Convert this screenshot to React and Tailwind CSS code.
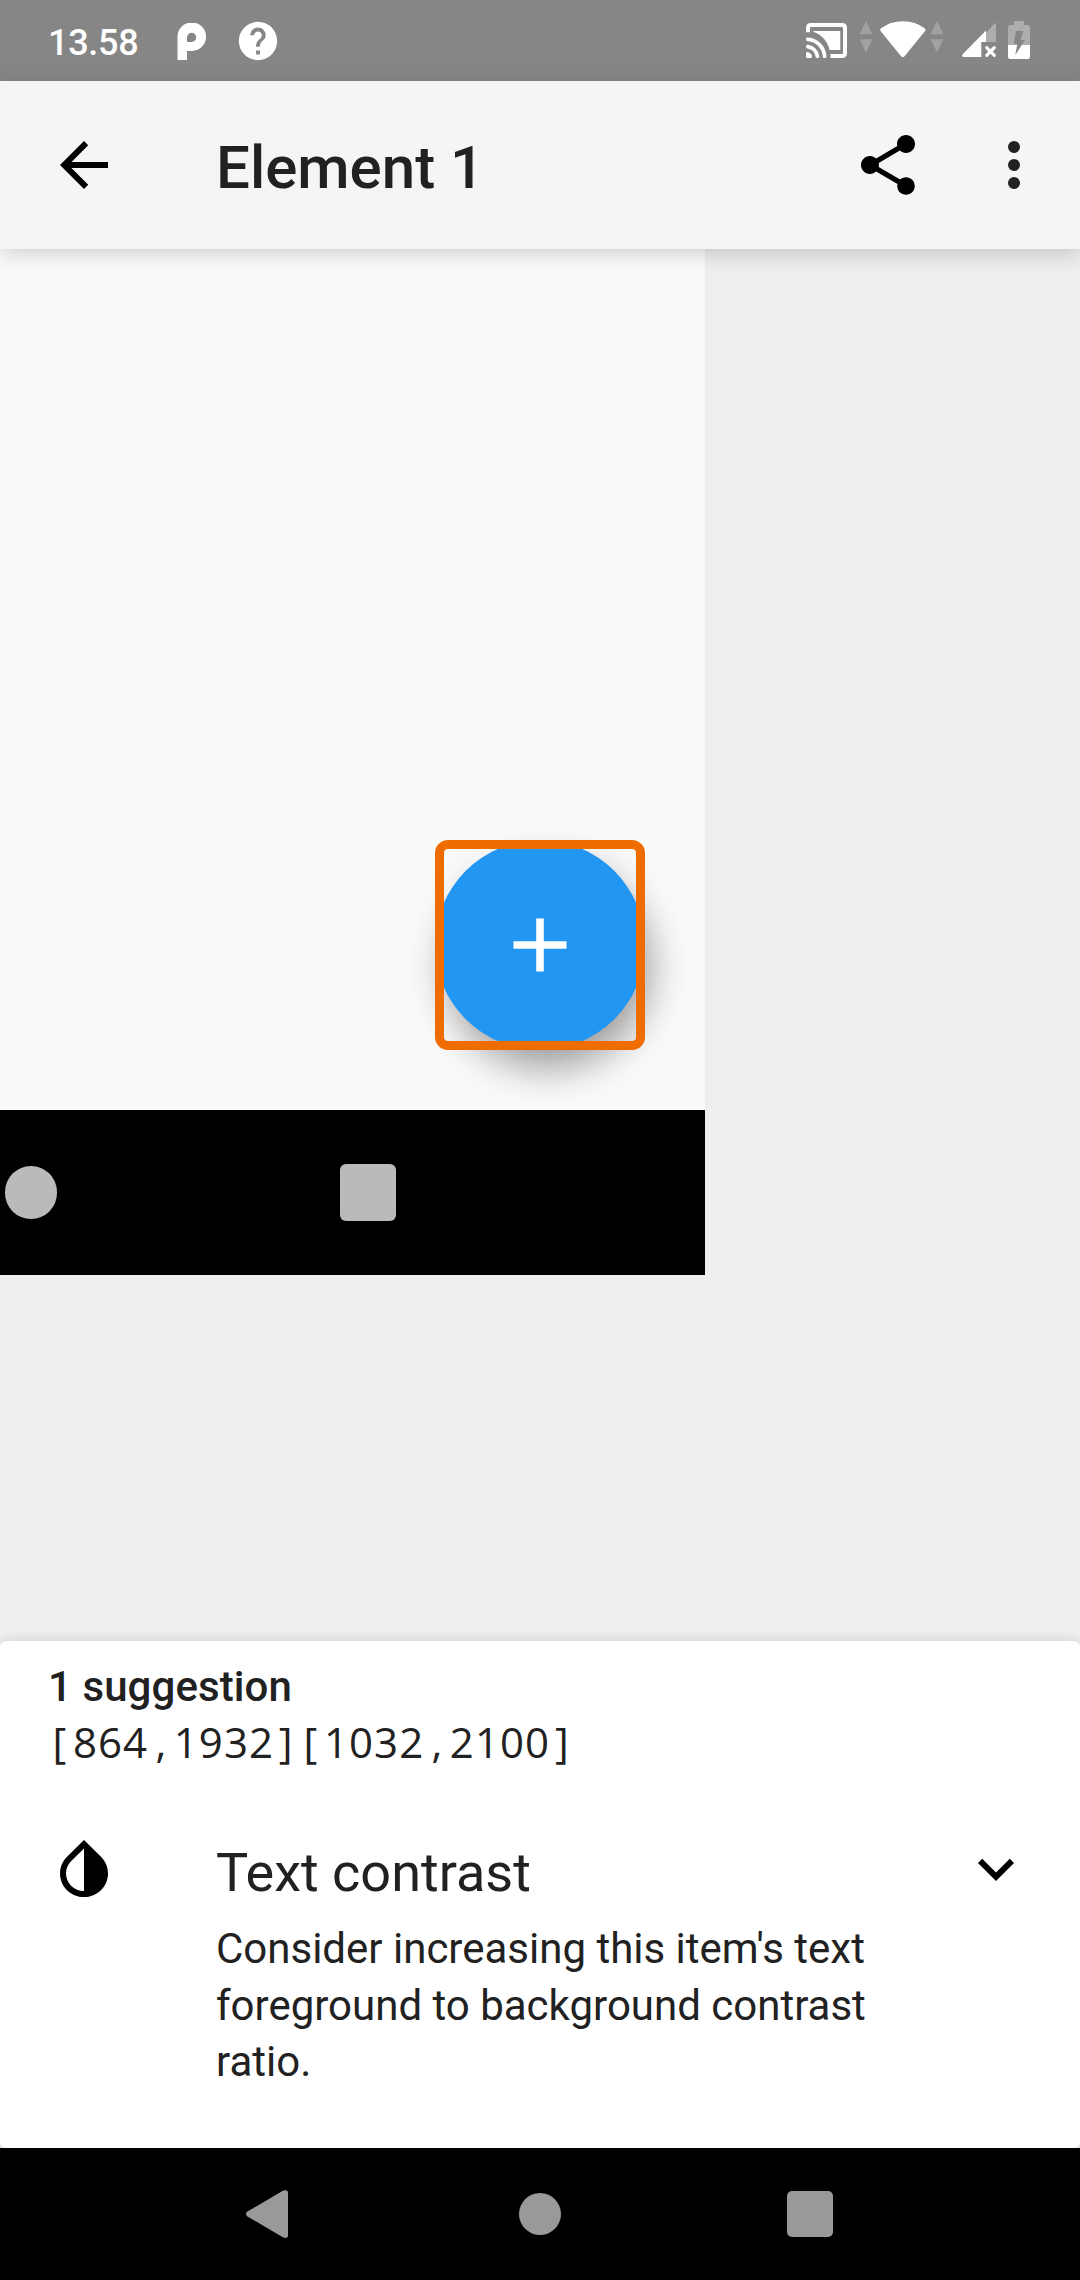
function CastIcon() {
  return (
    <svg className="h-[35px] w-[41px]" viewBox="0 0 41 35" fill="none">
      <path d="M2 9.3V5Q2 2 5 2H36Q39 2 39 5V30Q39 33 36 33H24.5" stroke="#fff" strokeWidth="4" />
      <path d="M7.5 8H34.3V27H23.6C21.5 18 15.5 11.5 7.5 9Z" fill="#fff" />
      <path d="M1.8 16.4A18 18 0 0 1 18.6 33.2M1.8 23.6A11.4 11.4 0 0 1 11.4 33.2" stroke="#fff" strokeWidth="3.7" strokeLinecap="round" />
      <path d="M0 30.2Q0 29 1.2 29Q6 30 6 33.8Q6 35 4.8 35H1.2Q0 35 0 33.8Z" fill="#fff" />
    </svg>
  );
}

function DataArrows() {
  return (
    <svg className="h-[32px] w-[14px]" viewBox="0 0 14 32" fill="#a1a1a1">
      <path d="M7 0L13.5 13.3H.5ZM7 31.5L13.5 18.2H.5Z" />
    </svg>
  );
}

function WifiIcon() {
  return (
    <svg className="h-[37px] w-[46px]" viewBox="0 0 46 37" fill="#fff">
      <path d="M.7 7.6Q10 .2 22.8 .2T45 7.6Q46 8.8 45.1 10L24.3 35.4Q22.8 37 21.3 35.4L.6 10Q-.3 8.8 .7 7.6Z" />
    </svg>
  );
}

function SignalIcon() {
  return (
    <svg className="h-[36px] w-[35px]" viewBox="0 0 35 36">
      <path d="M24 9.7L32.3 .5Q34 -.5 34 1.5V19H24Z" fill="#adadad" />
      <path d="M24 7.5V19H19.3V34H1.4Q-.8 33.5 .7 31.2Z" fill="#fff" />
      <path d="M24.7 24.6L32.3 32.4M32.3 24.6L24.7 32.4" stroke="#fff" strokeWidth="3.1" strokeLinecap="round" />
    </svg>
  );
}

function BatteryIcon() {
  return (
    <svg className="h-[38px] w-[22px]" viewBox="0 0 22 38">
      <path d="M6 0H16V4H20Q22 4 22 6V24H0V6Q0 4 2 4H6Z" fill="#adadad" />
      <path d="M0 24H22V36Q22 38 20 38H2Q0 38 0 36Z" fill="#fff" />
      <path d="M8 10H15.3L12.5 19H17L7.3 34L9.3 23H5.8Z" fill="#868686" />
    </svg>
  );
}

function StatusBar() {
  return (
    <header className="flex h-[81px] shrink-0 items-start bg-[#868686] pl-[48px] pr-[50px] text-white">
      <span className="mt-[21px] w-[129px] text-[36px] font-medium leading-[44px] tracking-[-0.3px]">13.58</span>
      <svg className="mt-[23px] h-[37px] w-[30px]" viewBox="0 0 30 37">
        <path fillRule="evenodd" fill="#fff" d="M.5 37V14.4A14.3 14.3 0 1 1 15 28H10V37ZM10 19H14.8A4.6 4.6 0 1 0 10 14.4Z" />
      </svg>
      <svg className="ml-[28px] mt-[18px] size-[46px]" viewBox="0 0 24 24" fill="#fff">
        <path d="M12 2C6.48 2 2 6.48 2 12s4.48 10 10 10 10-4.48 10-10S17.52 2 12 2zm1 17h-2v-2h2v2zm2.07-7.75l-.9.92C13.45 12.9 13 13.5 13 15h-2v-.5c0-1.1.45-2.1 1.17-2.83l1.24-1.26c.37-.36.59-.86.59-1.41 0-1.1-.9-2-2-2s-2 .9-2 2H8c0-2.21 1.79-4 4-4s4 1.79 4 4c0 .88-.36 1.68-.93 2.25z" />
      </svg>
      <div className="ml-auto flex items-start">
        <div className="mt-[23px]"><CastIcon /></div>
        <div className="ml-[12px] mt-[21px]"><DataArrows /></div>
        <div className="ml-[7px] mt-[21px]"><WifiIcon /></div>
        <div className="ml-[4px] mt-[21px]"><DataArrows /></div>
        <div className="ml-[18px] mt-[23px]"><SignalIcon /></div>
        <div className="ml-[11px] mt-[21px]"><BatteryIcon /></div>
      </div>
    </header>
  );
}

function Toolbar() {
  return (
    <div className="relative z-10 flex h-[168px] shrink-0 items-center bg-[#f5f5f5] pl-[48px] pr-[30px] shadow-[0_5px_20px_rgba(0,0,0,0.17)]">
      <svg className="size-[72px]" viewBox="0 0 24 24">
        <path d="M20 11H7.83l5.59-5.59L12 4l-8 8 8 8 1.41-1.41L7.83 13H20v-2z" />
      </svg>
      <h1 className="ml-[96px] flex-1 pt-[5px] text-[60px] font-medium leading-[70px] text-[#212121]">Element 1</h1>
      <svg className="size-[72px]" viewBox="0 0 24 24">
        <path d="M18 16.08c-.76 0-1.44.3-1.96.77L8.91 12.7c.05-.23.09-.46.09-.7s-.04-.47-.09-.7l7.05-4.11c.54.5 1.25.81 2.04.81 1.66 0 3-1.34 3-3s-1.34-3-3-3-3 1.34-3 3c0 .24.04.47.09.7L8.04 9.81C7.5 9.31 6.79 9 6 9c-1.66 0-3 1.34-3 3s1.34 3 3 3c.79 0 1.5-.31 2.04-.81l7.12 4.16c-.05.21-.08.43-.08.65 0 1.61 1.31 2.92 2.92 2.92s2.92-1.31 2.92-2.92-1.31-2.92-2.92-2.92z" />
      </svg>
      <svg className="ml-[54px] size-[72px]" viewBox="0 0 24 24" fill="#212121">
        <circle cx="12" cy="6" r="2" />
        <circle cx="12" cy="12" r="2" />
        <circle cx="12" cy="18" r="2" />
      </svg>
    </div>
  );
}

function Preview() {
  return (
    <main className="h-[1392px] shrink-0 bg-[#eee]">
      <div className="w-[705px]">
        <div className="flex h-[861px] items-end justify-end bg-[#fafafa] pb-[60px] pr-[60px]">
          <div className="relative flex size-[210px] items-center justify-center rounded-full bg-[#2196f3] shadow-[8px_21px_40px_-4px_rgba(0,0,0,0.4)]">
            <svg className="size-[54px]" viewBox="0 0 54 54">
              <path d="M.5 27H53.5M27 .5V53.5" stroke="#fff" strokeWidth="7.6" />
            </svg>
            <div className="absolute inset-0 rounded-[13px] border-[9px] border-[#ef6c00]" />
          </div>
        </div>
        <div className="flex h-[165px] items-center bg-black pl-[4.7px]">
          <div className="size-[52.4px] rounded-full bg-[#bababa]" />
          <div className="ml-[282.5px] size-[56.6px] rounded-[6px] bg-[#bababa]" />
        </div>
      </div>
    </main>
  );
}

function Bounds() {
  return (
    <p className="flex h-[57px] font-['Open_Sans',sans-serif] text-[42px] leading-[57px]">
      <span className="pl-[4.4px] pr-[6.8px]">[</span>
      <span className="tracking-[1.05px]">864</span>
      <span className="px-[7.4px]">,</span>
      <span className="tracking-[1.05px]">1932</span>
      <span className="pl-[4.8px] pr-[6.4px]">]</span>
      <span className="pl-[4.4px] pr-[6.8px]">[</span>
      <span className="tracking-[1.05px]">1032</span>
      <span className="px-[7.4px]">,</span>
      <span className="tracking-[1.05px]">2100</span>
      <span className="pl-[4.8px]">]</span>
    </p>
  );
}

function Suggestions() {
  return (
    <section className="relative z-10 h-[507px] shrink-0 rounded-[6px] bg-white px-[48px] pt-[19px] text-[#212121] shadow-[0_0_12px_rgba(0,0,0,0.14)]">
      <h2 className="h-[53px] text-[42px] font-medium leading-[54px] tracking-[0.08px]">1 suggestion</h2>
      <Bounds />
      <div className="mt-[62px] flex items-start">
        <svg className="mt-[2px] size-[72px] shrink-0" viewBox="0 0 24 24">
          <path d="M17.65 7.56L12 2 6.35 7.56C4.9 8.99 4 10.96 4 13.13 4 17.48 7.58 21 12 21s8-3.52 8-7.87c0-2.17-.9-4.14-2.35-5.57zM12 19c-3.31 0-6-2.63-6-5.87 0-1.56.62-3.03 1.75-4.14L12 4.81z" />
        </svg>
        <div className="ml-[96px] w-[660px]">
          <h3 className="h-[80px] text-[54px] leading-[81px]">Text contrast</h3>
          <p className="mt-[9px] text-[42px] leading-[56.5px]">Consider increasing this item's text foreground to background contrast ratio.</p>
        </div>
        <svg className="ml-auto mt-[1px] size-[72px] shrink-0" viewBox="0 0 24 24">
          <path d="M16.59 8.59L12 13.17 7.41 8.59 6 10l6 6 6-6z" />
        </svg>
      </div>
    </section>
  );
}

function NavigationBar() {
  return (
    <nav className="flex h-[132px] shrink-0 items-center bg-black pl-[246px]">
      <svg className="h-[48px] w-[42px]" viewBox="0 0 42 48" fill="#999">
        <path d="M1 21.8L37.3 .6Q42 -1 42 3V45Q42 49 37.3 47.4L1 26.2Q-1 24 1 21.8Z" />
      </svg>
      <div className="ml-[231px] size-[42px] rounded-full bg-[#999]" />
      <div className="ml-[226px] size-[45.5px] rounded-[5px] bg-[#999]" />
    </nav>
  );
}

export default function App() {
  return (
    <div className="flex h-[2280px] w-[1080px] flex-col overflow-hidden bg-[#eee] font-['Roboto',sans-serif]">
      <StatusBar />
      <Toolbar />
      <Preview />
      <Suggestions />
      <NavigationBar />
    </div>
  );
}
